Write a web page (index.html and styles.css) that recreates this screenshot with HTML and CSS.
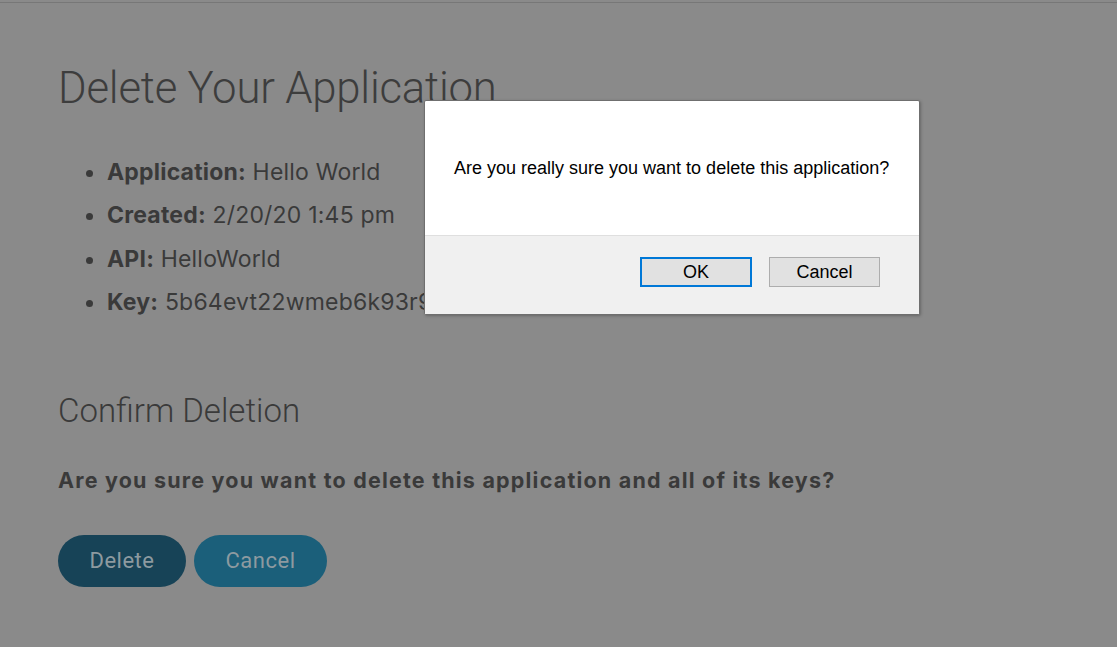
FILE: index.html
```html
<!DOCTYPE html>
<html>
<head>
<meta charset="utf-8">
<link rel="stylesheet" href="styles.css">
</head>
<body>
<div class="topline"></div>
<main class="page">
  <h1 class="title">Delete Your Application</h1>
  <ul class="details">
    <li><b>Application:</b> Hello World</li>
    <li><b>Created:</b> 2/20/20 1:45 pm</li>
    <li><b>API:</b> HelloWorld</li>
    <li><b>Key:</b> 5b64evt22wmeb6k93r9x4mbd</li>
  </ul>
  <h2 class="subtitle">Confirm Deletion</h2>
  <p class="question">Are you sure you want to delete this application and all of its keys?</p>
  <div class="actions">
    <button class="pill pill-dark">Delete</button>
    <button class="pill pill-light">Cancel</button>
  </div>
</main>
<div class="dialog">
  <div class="dialog-body">Are you really sure you want to delete this application?</div>
  <div class="dialog-footer">
    <button class="dbtn dbtn-default">OK</button>
    <button class="dbtn">Cancel</button>
  </div>
</div>
</body>
</html>
```

FILE: styles.css
```css
html, body {
  margin: 0;
  padding: 0;
  background: #8a8a8a;
  height: 100%;
  overflow: hidden;
}
body {
  font-family: "Inter", "Roboto", "Liberation Sans", sans-serif;
  color: #3a3a3a;
}
.topline {
  height: 2px;
  border-bottom: 1px solid #777777;
}
.page {
  padding: 60px 58px 0;
}
.title {
  margin: 0;
  font-family: "Roboto", sans-serif;
  font-weight: 300;
  font-size: 43.7px;
  line-height: 50px;
  letter-spacing: -0.2px;
  color: #3d3d3d;
}
.details {
  margin: 38px 0 0;
  padding-left: 49px;
  font-size: 23px;
  line-height: 43.4px;
  letter-spacing: 0.2px;
}
.details b {
  font-weight: 700;
}
.subtitle {
  margin: 66px 0 0;
  font-family: "Roboto", sans-serif;
  font-weight: 300;
  font-size: 33px;
  line-height: 40px;
}
.question {
  margin: 34px 0 0;
  font-weight: 700;
  font-size: 21.5px;
  line-height: 30px;
  letter-spacing: 1.2px;
}
.actions {
  display: flex;
  gap: 8px;
  margin-top: 40px;
}
.pill {
  height: 52px;
  border: none;
  border-radius: 26px;
  font-family: "Roboto", sans-serif;
  font-size: 22px;
  letter-spacing: 0.5px;
  color: #8d9aa0;
  padding: 0;
}
.pill-dark {
  width: 128px;
  background: #174357;
}
.pill-light {
  width: 133px;
  background: #1b5f7a;
}
.dialog {
  position: absolute;
  left: 424px;
  top: 100px;
  width: 494px;
  border: 1px solid #6f6f6f;
  border-radius: 2px;
  background: #ffffff;
  box-shadow: 1px 1px 3px rgba(0,0,0,0.25);
  font-family: "Liberation Sans", Arial, sans-serif;
  font-size: 18px;
  color: #000;
}
.dialog-body {
  height: 134px;
  display: flex;
  align-items: center;
  padding-left: 29px;
  box-sizing: border-box;
}
.dialog-footer {
  height: 79px;
  background: #f0f0f0;
  border-top: 1px solid #dfdfdf;
  display: flex;
  justify-content: flex-end;
  align-items: flex-start;
  gap: 17px;
  padding: 21px 39px 0 0;
  box-sizing: border-box;
}
.dbtn {
  width: 111px;
  height: 30px;
  background: #e1e1e1;
  border: 1px solid #adadad;
  font-family: "Liberation Sans", Arial, sans-serif;
  font-size: 18px;
  color: #000;
  padding: 0;
}
.dbtn-default {
  width: 112px;
  border: 2px solid #0078d7;
}
```
